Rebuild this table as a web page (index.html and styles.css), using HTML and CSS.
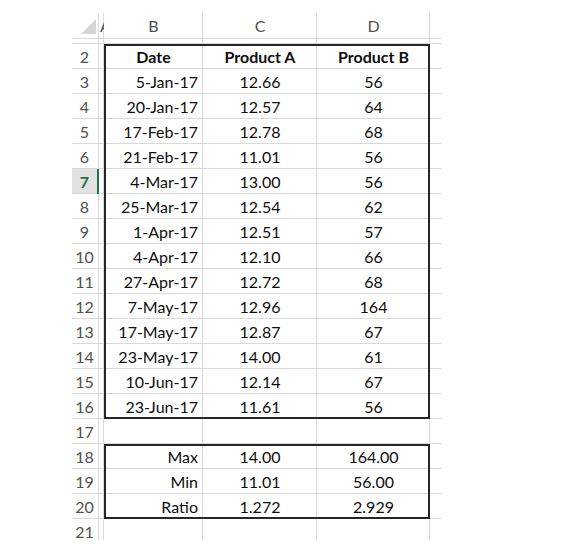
FILE: index.html
```html
<!DOCTYPE html>
<html>
<head>
<meta charset="utf-8">
<link rel="stylesheet" href="styles.css">
</head>
<body>
<div class="sheet">
  <div class="corner"><svg width="15" height="15" viewBox="0 0 15 15"><polygon points="15,0 15,15 0,15" fill="#d6d6d6"/></svg></div>
  <div class="ch cha">A</div>
  <div class="ch">B</div>
  <div class="ch">C</div>
  <div class="ch">D</div>
  <div class="ch e"></div>

  <div class="h hid"></div><div class="c"></div><div class="c"></div><div class="c"></div><div class="c"></div><div class="c e"></div>

  <div class="h">2</div><div class="c"></div><div class="c l t ctr bold">Date</div><div class="c t ctr bold">Product A</div><div class="c t r ctr bold">Product B</div><div class="c e"></div>
  <div class="h">3</div><div class="c"></div><div class="c l rt">5-Jan-17</div><div class="c ctr">12.66</div><div class="c r ctr">56</div><div class="c e"></div>
  <div class="h">4</div><div class="c"></div><div class="c l rt">20-Jan-17</div><div class="c ctr">12.57</div><div class="c r ctr">64</div><div class="c e"></div>
  <div class="h">5</div><div class="c"></div><div class="c l rt">17-Feb-17</div><div class="c ctr">12.78</div><div class="c r ctr">68</div><div class="c e"></div>
  <div class="h">6</div><div class="c"></div><div class="c l rt">21-Feb-17</div><div class="c ctr">11.01</div><div class="c r ctr">56</div><div class="c e"></div>
  <div class="h sel">7</div><div class="c"></div><div class="c l rt">4-Mar-17</div><div class="c ctr">13.00</div><div class="c r ctr">56</div><div class="c e"></div>
  <div class="h">8</div><div class="c"></div><div class="c l rt">25-Mar-17</div><div class="c ctr">12.54</div><div class="c r ctr">62</div><div class="c e"></div>
  <div class="h">9</div><div class="c"></div><div class="c l rt">1-Apr-17</div><div class="c ctr">12.51</div><div class="c r ctr">57</div><div class="c e"></div>
  <div class="h">10</div><div class="c"></div><div class="c l rt">4-Apr-17</div><div class="c ctr">12.10</div><div class="c r ctr">66</div><div class="c e"></div>
  <div class="h">11</div><div class="c"></div><div class="c l rt">27-Apr-17</div><div class="c ctr">12.72</div><div class="c r ctr">68</div><div class="c e"></div>
  <div class="h">12</div><div class="c"></div><div class="c l rt">7-May-17</div><div class="c ctr">12.96</div><div class="c r ctr">164</div><div class="c e"></div>
  <div class="h">13</div><div class="c"></div><div class="c l rt">17-May-17</div><div class="c ctr">12.87</div><div class="c r ctr">67</div><div class="c e"></div>
  <div class="h">14</div><div class="c"></div><div class="c l rt">23-May-17</div><div class="c ctr">14.00</div><div class="c r ctr">61</div><div class="c e"></div>
  <div class="h">15</div><div class="c"></div><div class="c l rt">10-Jun-17</div><div class="c ctr">12.14</div><div class="c r ctr">67</div><div class="c e"></div>
  <div class="h">16</div><div class="c"></div><div class="c l b rt">23-Jun-17</div><div class="c b ctr">11.61</div><div class="c r b ctr">56</div><div class="c e"></div>
  <div class="h">17</div><div class="c"></div><div class="c"></div><div class="c"></div><div class="c"></div><div class="c e"></div>
  <div class="h">18</div><div class="c"></div><div class="c l t rt">Max</div><div class="c t ctr">14.00</div><div class="c t r ctr">164.00</div><div class="c e"></div>
  <div class="h">19</div><div class="c"></div><div class="c l rt">Min</div><div class="c ctr">11.01</div><div class="c r ctr">56.00</div><div class="c e"></div>
  <div class="h">20</div><div class="c"></div><div class="c l b rt">Ratio</div><div class="c b ctr">1.272</div><div class="c r b ctr">2.929</div><div class="c e"></div>
  <div class="h">21</div><div class="c"></div><div class="c"></div><div class="c"></div><div class="c"></div><div class="c e"></div>
</div>
</body>
</html>
```
FILE: styles.css
```css
html, body {
  margin: 0;
  padding: 0;
  background: #ffffff;
}

body {
  font-family: Lato, "Open Sans", sans-serif;
  font-size: 16px;
  color: #0d0d0d;
}

.sheet {
  --grid: #d9d9d9;
  --line: #262626;
  margin: 13px 0 0 72px;
  width: 369px;
  height: 527px;
  overflow: hidden;
  display: grid;
  grid-template-columns: 27px 5px 99px 114px 113px 11px;
  grid-template-rows: 26px 5px repeat(20, 25px);
  line-height: 25px;
  white-space: nowrap;
}

.corner {
  display: flex;
  justify-content: flex-end;
  align-items: flex-end;
  padding: 0 3px 5px 0;
  box-shadow: inset -1px -1px 0 var(--grid);
}

.corner svg {
  display: block;
}

.ch {
  text-align: center;
  color: #505050;
  box-shadow: inset -1px -1px 0 var(--grid);
  overflow: hidden;
}

.cha {
  text-align: left;
  text-indent: 1px;
}

.ch.e {
  box-shadow: inset 0 -1px 0 var(--grid);
}

.h {
  text-align: center;
  padding-right: 2px;
  color: #505050;
  box-shadow: inset -1px -1px 0 var(--grid);
  overflow: hidden;
}

.h.hid {
  padding: 0;
}

.h.sel {
  background: #e1e1e1;
  color: #217346;
  font-weight: 700;
  box-shadow: inset -2px 0 0 #217346, inset 0 -1px 0 var(--grid);
}

.c {
  --t: 0 0 0 transparent;
  --l: 0 0 0 transparent;
  --r: 0 0 0 transparent;
  --b: 0 0 0 transparent;
  box-shadow: var(--t), var(--l), var(--r), var(--b), inset -1px -1px 0 var(--grid);
  overflow: hidden;
}

.c.e {
  box-shadow: inset 0 -1px 0 var(--grid);
}

.t { --t: inset 0 2px 0 var(--line); }
.l { --l: inset 2px 0 0 var(--line); }
.r { --r: inset -2px 0 0 var(--line); }
.b { --b: inset 0 -2px 0 var(--line); }

.ctr {
  text-align: center;
}

.rt {
  text-align: right;
  padding-right: 5px;
}

.bold {
  font-weight: 700;
}
```
